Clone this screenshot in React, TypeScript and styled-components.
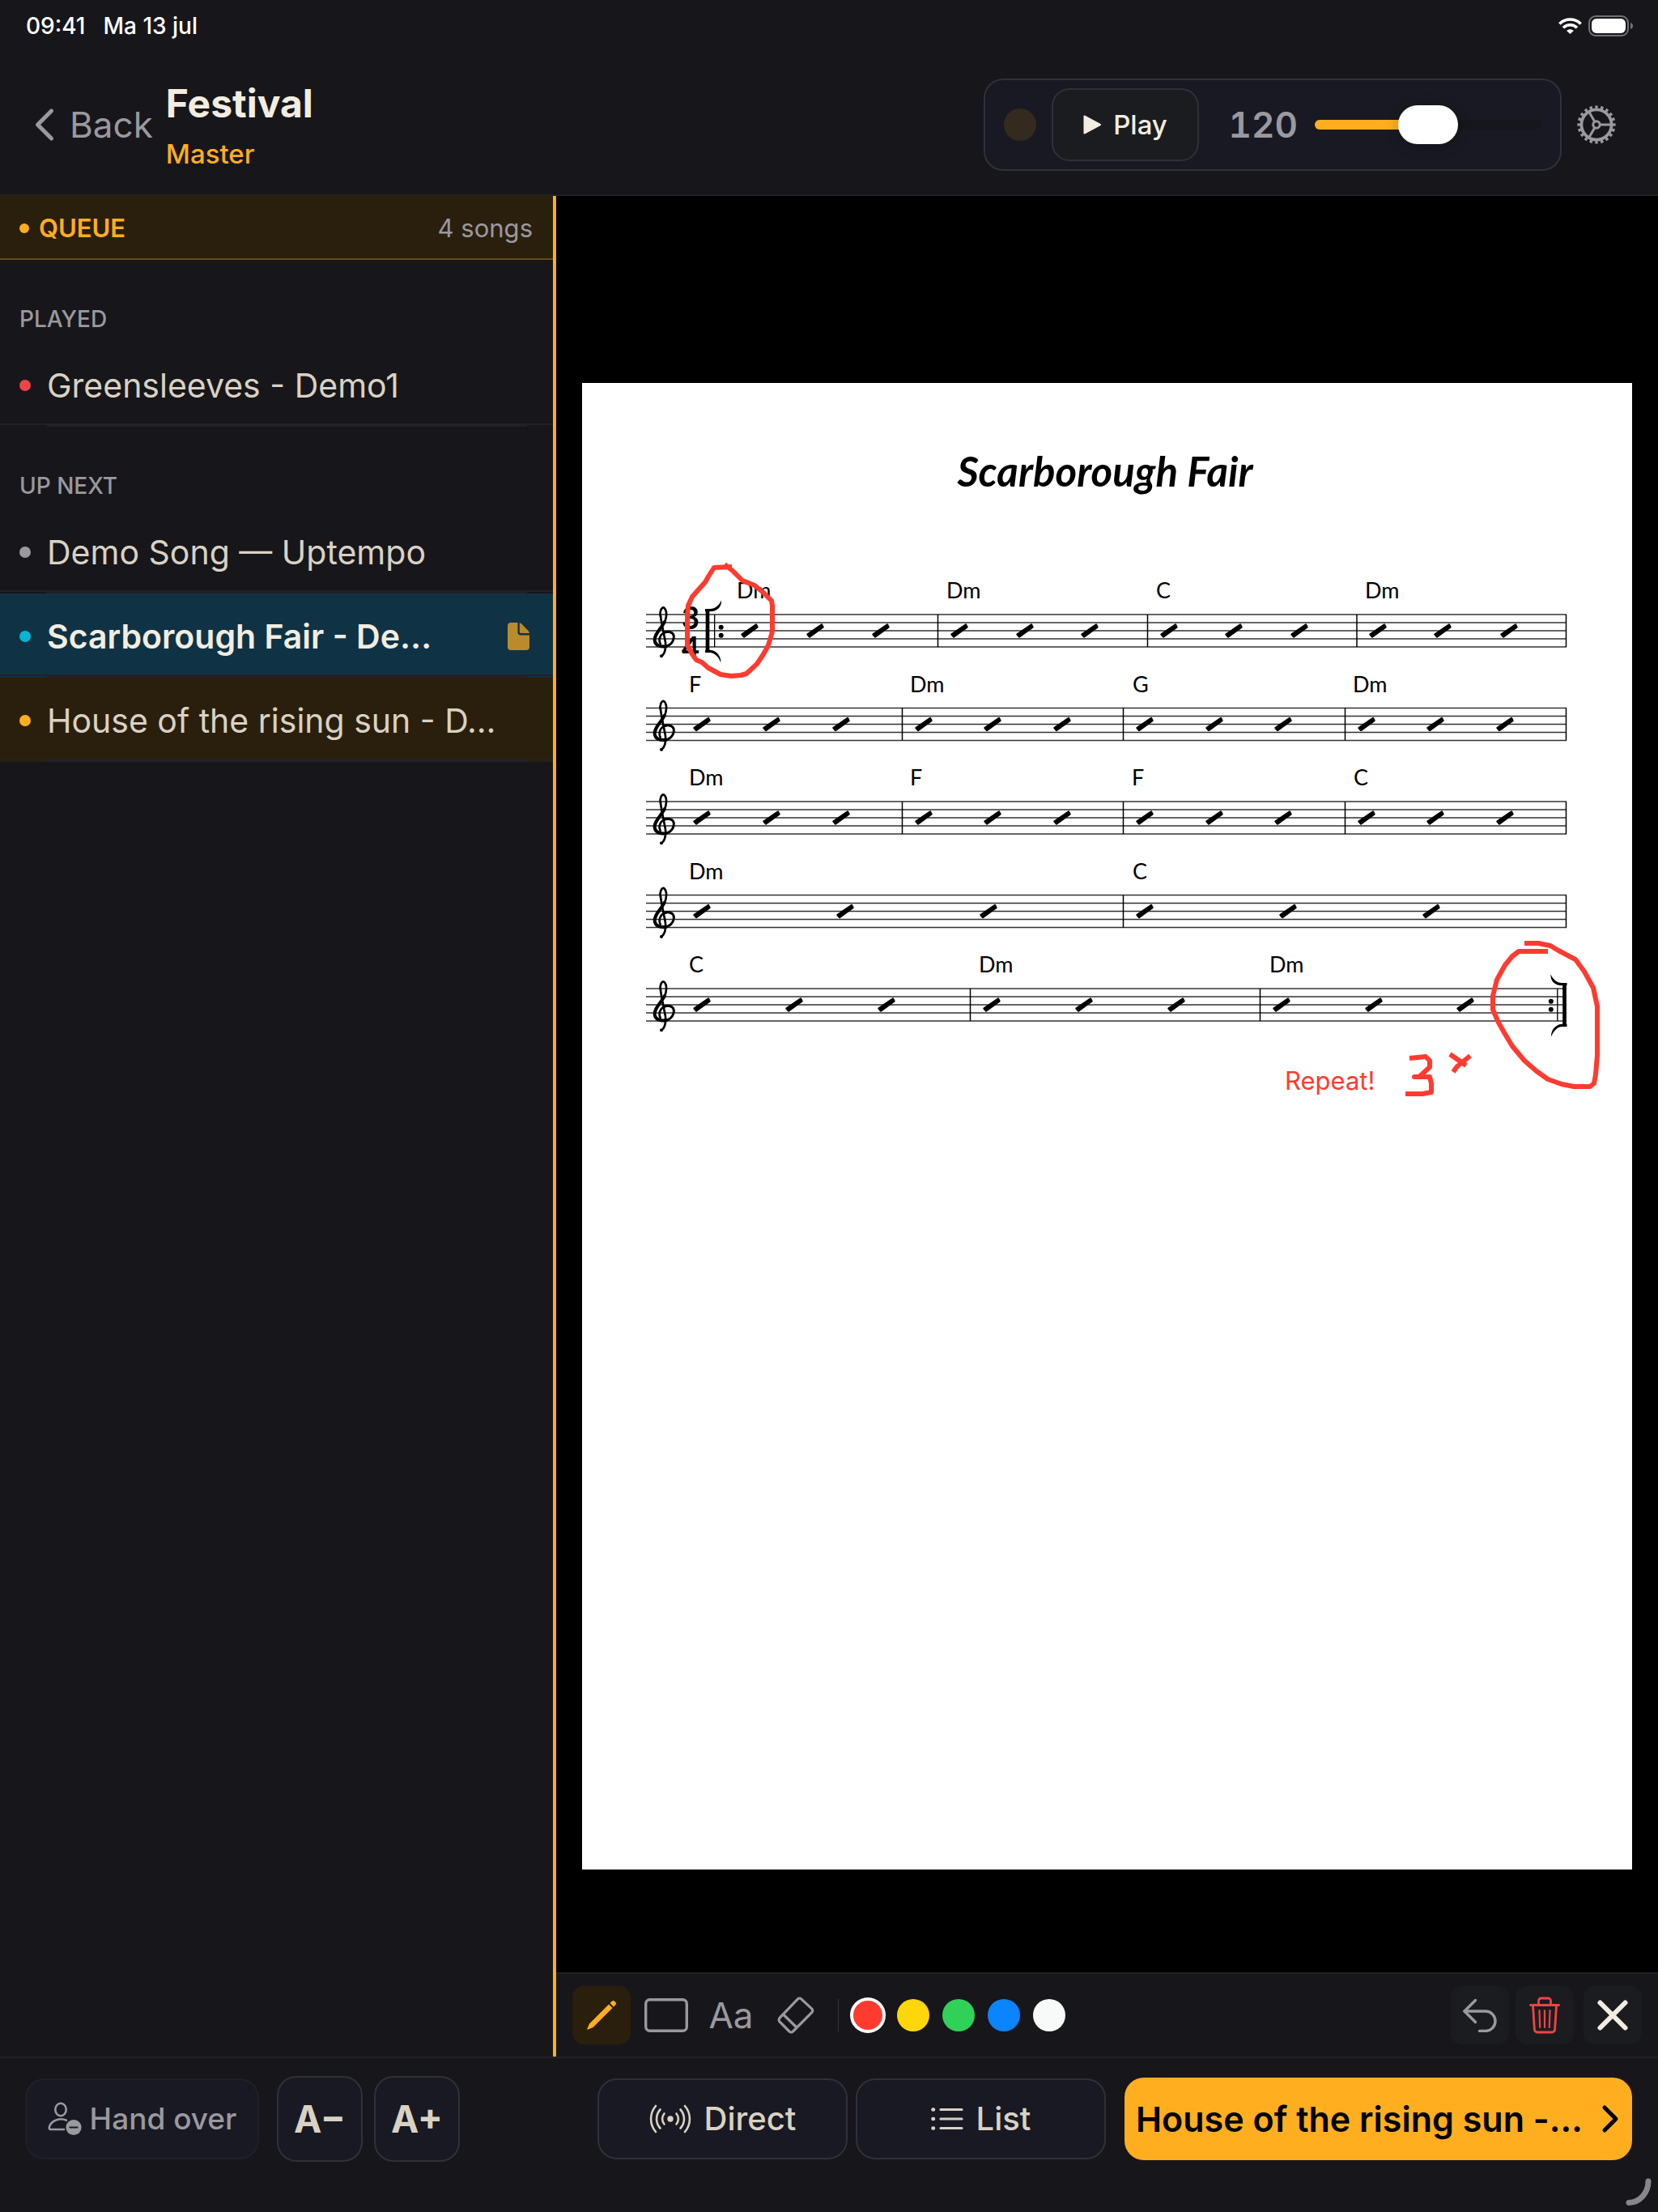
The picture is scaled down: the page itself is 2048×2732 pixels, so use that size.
import React, { useState } from "react";
import styled, { createGlobalStyle, css } from "styled-components";

const color = {
  bg: "#17161b",
  panel: "#181922",
  raised: "#1b1c20",
  line: "#222127",
  outline: "#303138",
  amber: "#ffae20",
  amberDim: "#2a1f0d",
  cream: "#f2ede0",
  sand: "#d9d2c3",
  muted: "#9a999e",
  red: "#ff3b30",
};

const GlobalStyle = createGlobalStyle`
  *, *::before, *::after { box-sizing: border-box; }
  body { margin: 0; background: ${color.bg}; }
  button, input { font: inherit; color: inherit; margin: 0; }
  h1, h2, p, ul { margin: 0; padding: 0; font: inherit; }
`;

const App_ = styled.div`
  position: relative;
  display: flex;
  flex-direction: column;
  min-height: 100vh;
  background: ${color.bg};
  color: ${color.cream};
  font-family: Inter, "Liberation Sans", sans-serif;
`;

/* ---------- status bar ---------- */

const StatusBar = styled.div`
  display: flex;
  align-items: center;
  justify-content: space-between;
  height: 64px;
  padding: 0 30px 0 32px;
  color: #fff;
  font-size: 28px;
  line-height: 32px;
  font-weight: 500;
`;

const StatusGroup = styled.div<{ $gap: number }>`
  display: flex;
  align-items: center;
  gap: ${(p) => p.$gap}px;
`;

/* ---------- header ---------- */

const Header = styled.header`
  display: flex;
  align-items: center;
  justify-content: space-between;
  height: 178px;
  padding: 3px 52px 0 42px;
  border-bottom: 2px solid ${color.line};
`;

const HeaderSide = styled.div<{ $gap: number }>`
  display: flex;
  align-items: center;
  gap: ${(p) => p.$gap}px;
`;

const PlainButton = styled.button`
  display: flex;
  align-items: center;
  padding: 0;
  border: 0;
  background: none;
  color: ${color.muted};
`;

const BackButton = styled(PlainButton)`
  gap: 18px;
  font-size: 44px;
  line-height: 52px;
`;

const TitleBlock = styled.div`
  display: flex;
  flex-direction: column;
  gap: 12px;
`;

const Title = styled.h1`
  font-size: 48px;
  line-height: 60px;
  font-weight: 700;
`;

const Role = styled.p`
  color: ${color.amber};
  font-size: 33px;
  line-height: 40px;
  font-weight: 500;
`;

const Metronome = styled.section`
  display: flex;
  align-items: center;
  height: 114px;
  padding: 0 23px;
  border: 2px solid ${color.outline};
  border-radius: 24px;
  background: ${color.panel};
`;

const BeatLight = styled.span`
  width: 40px;
  height: 40px;
  margin-right: 19px;
  border-radius: 50%;
  background: #342a1e;
`;

const PlayButton = styled.button`
  display: flex;
  align-items: center;
  justify-content: center;
  gap: 14px;
  width: 182px;
  height: 90px;
  padding: 0;
  border: 2px solid ${color.outline};
  border-radius: 22px;
  background: ${color.raised};
  color: ${color.cream};
  font-size: 33px;
  line-height: 40px;
  font-weight: 500;
`;

const Tempo = styled.label`
  width: 122px;
  margin-right: 21px;
  text-align: right;
  color: ${color.muted};
  font-size: 44px;
  line-height: 52px;
  font-weight: 600;
  font-variant-numeric: tabular-nums;
`;

const TempoSlider = styled.input`
  appearance: none;
  width: 280px;
  height: 48px;
  background: none;
  outline: none;

  &::-webkit-slider-runnable-track {
    height: 12px;
    border-radius: 6px;
    background: linear-gradient(
      to right,
      ${color.amber} var(--fill),
      #16171a var(--fill)
    );
  }

  &::-webkit-slider-thumb {
    appearance: none;
    width: 74px;
    height: 48px;
    margin-top: -18px;
    border-radius: 24px;
    background: #fff;
    box-shadow: 0 2px 16px rgba(0, 0, 0, 0.25);
  }
`;

/* ---------- body ---------- */

const Body = styled.div`
  display: flex;
  flex: 1;
  min-height: 0;
`;

const Sidebar = styled.aside`
  flex: 0 0 687px;
  border-right: 4px solid ${color.amber};
`;

const QueueHeader = styled.div`
  display: flex;
  align-items: center;
  gap: 12px;
  height: 79px;
  padding: 3px 25px 0 24px;
  border-bottom: 2px solid #6b4a14;
  background: ${color.amberDim};
  font-size: 31px;
  line-height: 40px;
`;

const Dot = styled.span<{ $color: string; $size: number }>`
  flex: none;
  width: ${(p) => p.$size}px;
  height: ${(p) => p.$size}px;
  border-radius: 50%;
  background: ${(p) => p.$color};
`;

const QueueTitle = styled.h2`
  flex: 1;
  color: ${color.amber};
  font-weight: 600;
`;

const QueueCount = styled.span`
  color: ${color.muted};
`;

const SectionLabel = styled.h2`
  display: flex;
  align-items: flex-end;
  height: 102px;
  padding: 0 24px 12px;
  color: ${color.muted};
  font-size: 28px;
  line-height: 34px;
  font-weight: 500;
`;

const SongList = styled.ul`
  list-style: none;
`;

type RowTone = "plain" | "current" | "next";
const rowBackground: Record<RowTone, string> = {
  plain: "transparent",
  current: "#103245",
  next: color.amberDim,
};

const SongRow = styled.li<{ $tone: RowTone }>`
  background: ${(p) => rowBackground[p.$tone]};

  &::after {
    content: "";
    display: block;
    height: 2px;
    margin: 0 32px 0 58px;
    background: ${color.line};
  }
`;

const SongButton = styled.button<{ $bold: boolean }>`
  display: flex;
  align-items: center;
  gap: 20px;
  width: 100%;
  height: 102px;
  padding: 5px 28px 0 24px;
  border: 0;
  border-bottom: 2px solid ${color.line};
  background: none;
  text-align: left;
  font-size: 41px;
  line-height: 52px;
  color: ${(p) => (p.$bold ? color.cream : color.sand)};
  font-weight: ${(p) => (p.$bold ? 600 : 400)};
`;

const SongName = styled.span`
  flex: 1;
  white-space: nowrap;
`;

const Viewer = styled.main`
  display: flex;
  flex-direction: column;
  flex: 1;
  min-width: 0;
`;

const Stage = styled.div`
  display: flex;
  flex: 1;
  align-items: center;
  padding: 104px 32px 0;
  background: #000;
`;

const SheetSvg = styled.svg`
  display: block;
  width: 100%;
  height: auto;
  background: #fff;
`;

const Toolbar = styled.div`
  display: flex;
  align-items: center;
  justify-content: space-between;
  height: 104px;
  padding: 0 20px;
  border-top: 2px solid ${color.line};
`;

const ToolGroup = styled.div<{ $gap: number }>`
  display: flex;
  align-items: center;
  gap: ${(p) => p.$gap}px;
`;

const ToolButton = styled.button<{ $look?: "active" | "raised" }>`
  display: flex;
  align-items: center;
  justify-content: center;
  width: 72px;
  height: 72px;
  padding: 0;
  border: 0;
  border-radius: 14px;
  font-size: 44px;
  line-height: 52px;
  color: ${color.muted};
  background: ${(p) =>
    p.$look === "active"
      ? color.amberDim
      : p.$look === "raised"
        ? color.raised
        : "none"};
`;

const Divider = styled.span`
  width: 1px;
  height: 40px;
  background: #36353b;
`;

const Swatch = styled.input<{ $color: string }>`
  appearance: none;
  width: 40px;
  height: 40px;
  border-radius: 50%;
  background: ${(p) => p.$color};

  &:checked {
    border: 2px solid #fff;
    box-shadow: 0 0 0 2px #fff;
  }
`;

/* ---------- footer ---------- */

const Footer = styled.footer`
  display: grid;
  grid-template-columns: 707px 1fr;
  align-items: center;
  height: 192px;
  padding: 0 32px 41px 31px;
  border-top: 2px solid ${color.line};
`;

const FooterGroup = styled.div<{ $gap: number }>`
  display: flex;
  align-items: center;
  gap: ${(p) => p.$gap}px;
`;

const FooterButton = styled.button<{ $kind: "ghost" | "normal" | "square" | "primary" }>`
  display: flex;
  align-items: center;
  justify-content: center;
  height: 100px;
  padding: 0;
  border: 2px solid ${color.outline};
  border-radius: 24px;
  background: ${color.panel};
  color: ${color.sand};
  font-size: 40px;
  line-height: 48px;
  font-weight: 500;
  white-space: nowrap;

  ${(p) =>
    p.$kind === "ghost" &&
    css`
      gap: 10px;
      width: 289px;
      margin-right: 8px;
      border-color: #202127;
      color: ${color.muted};
      font-size: 37px;
    `}
  ${(p) =>
    p.$kind === "normal" &&
    css`
      gap: 16px;
      width: 309px;
    `}
  ${(p) =>
    p.$kind === "square" &&
    css`
      width: 106px;
      height: 106px;
      font-size: 46px;
      font-weight: 700;
    `}
  ${(p) =>
    p.$kind === "primary" &&
    css`
      flex: 1;
      justify-content: space-between;
      height: 102px;
      margin-left: 13px;
      padding: 0 16px 0 14px;
      border: 0;
      background: ${color.amber};
      color: #000;
      font-size: 43px;
      line-height: 52px;
      font-weight: 600;
    `}
`;

const ResizeMark = styled.svg`
  position: absolute;
  right: 6px;
  bottom: 6px;
`;

/* ---------- icons ---------- */

const WifiIcon = () => (
  <svg width="29" height="20" viewBox="0 0 29 20" fill="none" stroke="#fff" strokeWidth="3.6">
    <path d="M1.4 7.4C8.6 0.2 20.4 0.2 27.6 7.4" />
    <path d="M6 12.2C10.7 7.6 18.3 7.6 23 12.2" />
    <path d="M10.2 16C12.6 13.6 16.4 13.6 18.8 16L14.5 20Z" fill="#fff" stroke="none" />
  </svg>
);

const BatteryIcon = () => (
  <svg width="56" height="26" viewBox="0 0 56 26">
    <rect x="1" y="1" width="48" height="24" rx="8" fill="none" stroke="#737276" strokeWidth="2" />
    <rect x="4" y="4" width="42" height="18" rx="6" fill="#fff" />
    <path d="M52 9C54.4 9.8 55 11.4 55 13S54.4 16.2 52 17Z" fill="#737276" />
  </svg>
);

const ChevronLeft = () => (
  <svg width="26" height="42" viewBox="0 0 26 42" fill="none" stroke="currentColor" strokeWidth="5" strokeLinecap="round" strokeLinejoin="round">
    <path d="M21.5 4L4.5 21L21.5 38" />
  </svg>
);

const ChevronRight = () => (
  <svg width="22" height="36" viewBox="0 0 22 36" fill="none" stroke="currentColor" strokeWidth="5" strokeLinecap="round" strokeLinejoin="round">
    <path d="M4 4L18 18L4 32" />
  </svg>
);

const PlayIcon = () => (
  <svg width="23" height="26" viewBox="0 0 23 26" fill="currentColor" stroke="currentColor" strokeWidth="2" strokeLinejoin="round">
    <path d="M1.5 2.5V23.5L21 13Z" />
  </svg>
);

const GearIcon = () => (
  <svg width="48" height="48" viewBox="-24 -24 48 48" fill="none" stroke="currentColor">
    <circle r="18.6" strokeWidth="3.8" />
    <circle r="21.6" strokeWidth="4" pathLength="40" strokeDasharray="1 1" strokeDashoffset="0.5" />
    <circle r="4.2" strokeWidth="3" />
    <path d="M5 0H18M-2.5 -4.3L-9 -15.6M-2.5 4.3L-9 15.6" strokeWidth="3" />
  </svg>
);

const FileIcon = () => (
  <svg width="28" height="36" viewBox="0 0 28 36" fill="#b98b2b">
    <path d="M4 1H12.5V12.5A4 4 0 0 0 16.500 16.500H27V31A4 4 0 0 1 23 35H4A4 4 0 0 1 0 31V5A4 4 0 0 1 4 1Z" />
    <path d="M14.800 1.500C16 1.500 17 2.200 18 3.200L25 10.400C26.200 11.700 26.800 12.600 26.900 14H16.500A1.700 1.700 0 0 1 14.800 12.300Z" />
  </svg>
);

const PencilIcon = () => (
  <svg width="40" height="40" viewBox="0 0 40 40" fill={color.amber}>
    <path d="M29 6.500L33.500 11L9.500 35L3.400 37.600A0.800 0.800 0 0 1 2.400 36.600L5 30.500Z" />
    <path d="M30.500 5L32.500 3A2.800 2.800 0 0 1 36.500 3L37 3.500A2.800 2.800 0 0 1 37 7.500L35 9.500Z" />
  </svg>
);

const RectIcon = () => (
  <svg width="54" height="42" viewBox="0 0 54 42" fill="none" stroke="currentColor" strokeWidth="3.4">
    <rect x="1.700" y="1.700" width="50.600" height="38.600" rx="5" />
  </svg>
);

const EraserIcon = () => (
  <svg width="46" height="46" viewBox="0 0 46 46" fill="none" stroke="currentColor" strokeWidth="3.2" strokeLinejoin="round">
    <path d="M25.500 2.900A3 3 0 0 1 29.700 2.900L42.900 15.200A3 3 0 0 1 42.900 19.400L19.500 43A3 3 0 0 1 15 43L3.200 31.200A3.500 3.500 0 0 1 3.200 26.200Z" />
    <path d="M7.500 22L24.500 38.500" />
  </svg>
);

const UndoIcon = () => (
  <svg width="42" height="42" viewBox="0 0 42 42" fill="none" stroke="currentColor" strokeWidth="3.4" strokeLinecap="round" strokeLinejoin="round">
    <path d="M15.500 2.500L2 16L15.500 29.500" />
    <path d="M2 16H28A12 12.200 0 0 1 28 40.400H20.500" />
  </svg>
);

const TrashIcon = () => (
  <svg width="38" height="46" viewBox="0 0 38 46" fill="none" stroke="#ef4444" strokeWidth="2.800" strokeLinecap="round" strokeLinejoin="round">
    <path d="M1.500 10.500H36.500" />
    <path d="M11.500 10V5A3 3 0 0 1 14.500 2H23.500A3 3 0 0 1 26.500 5V10" />
    <path d="M4.500 11L6.400 40.500A3.600 3.600 0 0 0 10 44H28A3.600 3.600 0 0 0 31.600 40.500L33.500 11" />
    <path d="M12.500 17L13.200 38M19 17V38M25.500 17L24.800 38" strokeWidth="2.200" />
  </svg>
);

const CloseIcon = () => (
  <svg width="40" height="40" viewBox="0 0 40 40" fill="none" stroke={color.cream} strokeWidth="6" strokeLinecap="round">
    <path d="M4.500 4.500L35.500 35.500M35.500 4.500L4.500 35.500" />
  </svg>
);

const HandOverIcon = () => (
  <svg width="42" height="42" viewBox="0 0 42 42" fill="none" stroke="currentColor" strokeWidth="2.600" strokeLinecap="round">
    <ellipse cx="16" cy="9.500" rx="6.700" ry="7.800" />
    <path d="M23 22.700C17 20 8 21 3.500 27.500C1.500 30.500 0.800 34 3.500 34H20" />
    <circle cx="32" cy="31.500" r="9.600" fill="currentColor" stroke="none" />
    <path d="M27.500 31.500H36.500" stroke={color.panel} strokeWidth="2.200" />
  </svg>
);

const BroadcastIcon = () => (
  <svg width="52" height="36" viewBox="-26 -18 52 36" fill="none" stroke="currentColor" strokeWidth="2.600" strokeLinecap="round">
    <circle r="3.700" fill="currentColor" stroke="none" />
    <path d="M7.500 -6.500A10 10 0 0 1 7.500 6.500M-7.500 -6.500A10 10 0 0 0 -7.500 6.500" />
    <path d="M12.500 -11.500A17 17 0 0 1 12.500 11.500M-12.500 -11.500A17 17 0 0 0 -12.500 11.500" />
    <path d="M18 -16A24.500 24.500 0 0 1 18 16M-18 -16A24.500 24.500 0 0 0 -18 16" />
  </svg>
);

const ListIcon = () => (
  <svg width="40" height="32" viewBox="0 0 40 32" fill="none" stroke="currentColor" strokeWidth="3.200" strokeLinecap="round">
    <path d="M12 4.500H38M12 16H38M12 27.500H38" />
    <path d="M2.500 4.500H3M2.500 16H3M2.500 27.500H3" strokeWidth="4.600" />
  </svg>
);

/* ---------- sheet music ---------- */

type Staff = { top: number; chords: [number, string][]; bars: number[]; beats: number[] };

const evenBeats = [148, 234, 320, 422, 507, 593, 695, 781, 866, 969, 1054, 1140];
const evenBars = [395.5, 668.5, 942.5, 1215.5];

const staves: Staff[] = [
  {
    top: 286,
    chords: [[191, "Dm"], [450, "Dm"], [709, "C"], [967, "Dm"]],
    bars: [439.5, 698.5, 957, 1215.5],
    beats: [207, 288, 369, 466, 547, 627, 725, 805, 886, 983, 1063, 1145],
  },
  {
    top: 401.5,
    chords: [[132, "F"], [405, "Dm"], [680, "G"], [952, "Dm"]],
    bars: evenBars,
    beats: evenBeats,
  },
  {
    top: 517,
    chords: [[132, "Dm"], [405, "F"], [679, "F"], [953, "C"]],
    bars: evenBars,
    beats: evenBeats,
  },
  {
    top: 632.5,
    chords: [[132, "Dm"], [680, "C"]],
    bars: [668.5, 1215.5],
    beats: [148, 325, 502, 695, 872, 1049],
  },
  {
    top: 748,
    chords: [[132, "C"], [490, "Dm"], [849, "Dm"]],
    bars: [479.5, 837.5],
    beats: [148, 262, 376, 506, 620, 734, 864, 978, 1091],
  },
];

const Clef = ({ top }: { top: number }) => (
  <g transform={`translate(61 ${top}) scale(0.3333) translate(0 -236)`} fill="none" stroke="#000" strokeLinecap="round">
    <path d="M108 242C103 226 112 206 121 211C133 222 131 248 121 268" strokeWidth="8" />
    <path d="M122 264C108 292 84 308 86 332C88 352 112 358 130 353" strokeWidth="12" />
    <path d="M118 354C140 356 158 338 157 316C155 300 136 298 124 302" strokeWidth="9" />
    <path d="M150 304C136 296 118 300 110 312C102 324 102 334 107 344" strokeWidth="8" />
    <path d="M108 242C112 275 122 315 126 340C128 362 122 382 111 391" strokeWidth="8" />
    <circle cx="111" cy="390" r="3" strokeWidth="6" />
  </g>
);

/* Winged repeat sign; `flip` mirrors it for the closing one. */
const RepeatSign = ({ x, top, flip }: { x: number; top: number; flip?: boolean }) => (
  <g transform={`translate(${x} ${top}) scale(${flip ? -0.3333 : 0.3333} 0.3333)`}>
    <rect x="-7" y="-18" width="14" height="156" />
    <rect x="24" y="0" width="4" height="120" />
    <path d="M-9 -21H8C26 -20 44 -34 51 -53C53 -30 38 -11 8 -11H-9Z" />
    <path d="M-9 131H8C34 131 52 158 49 178C42 158 26 141 8 141H-9Z" />
    <circle cx="50" cy="47" r="9" />
    <circle cx="50" cy="77" r="9" />
  </g>
);

const Ink = styled.polyline`
  fill: none;
  stroke: ${color.red};
  stroke-width: 6;
  stroke-linejoin: round;
`;

const Notation = styled.text`
  font-family: Lato, sans-serif;
  font-size: 27px;
`;

const SheetTitle = styled.text`
  font-family: Lato, sans-serif;
  font-size: 51px;
  font-style: italic;
  font-weight: 700;
  text-anchor: middle;
`;

const TimeDigit = styled.text`
  font-family: Lato, sans-serif;
  font-size: 38px;
  font-weight: 700;
  text-anchor: middle;
`;

const NoteText = styled.text`
  font-family: Inter, sans-serif;
  font-size: 31px;
  fill: ${color.red};
`;

const Sheet = () => (
  <SheetSvg viewBox="0 0 1297 1836" role="img" aria-label="Scarborough Fair">
    <SheetTitle x="646" y="128">Scarborough Fair</SheetTitle>
    {staves.map((s) => (
      <g key={s.top}>
        {[0, 10, 20, 30, 40].map((dy) => (
          <path key={dy} d={`M79 ${s.top + dy}H1216`} stroke="#333" strokeWidth="1.500" />
        ))}
        {s.bars.map((x) => (
          <path key={x} d={`M${x} ${s.top}v40`} stroke="#000" strokeWidth="1.500" />
        ))}
        <Clef top={s.top} />
        {s.chords.map(([x, name]) => (
          <Notation key={x} x={x} y={s.top - 20}>{name}</Notation>
        ))}
        {s.beats.map((x) => (
          <path
            key={x}
            transform={`translate(${x} ${s.top + 20})`}
            d="M-9.500 4.500L-7 7.500L9.500 -4.500L8 -7.500Z"
            stroke="#000"
            strokeWidth="2.400"
            strokeLinejoin="round"
          />
        ))}
      </g>
    ))}
    <TimeDigit x="134" y="304">3</TimeDigit>
    <TimeDigit x="134" y="341">4</TimeDigit>
    <RepeatSign x={155} top={286} />
    <RepeatSign x={1213.5} top={748} flip />

    <Ink points="185,227 163,228 156,239 152,246 136,264 131,275 130,287 130,324 136,335 141,342 148,345 156,352 171,360 184,362 196,361 203,359 216,347 224,335 230,324 235,307 235,275 234,269 224,259 213,250 198,244 186,232 176,224" />
    <Ink points="1193,702 1157,702 1149,708 1140,719 1130,737 1125,757 1125,774 1132,790 1140,804 1149,819 1164,837 1179,850 1193,860 1210,866 1225,869 1245,869 1250,865 1252,854 1254,830 1254,770 1249,747 1238,727 1227,712 1206,701 1196,695 1181,692 1164,692" />
    <Ink points="1022,834 1042,832 1047,837 1047,845 1034,857 1028,857 1047,857 1049,865 1049,876 1038,878 1017,878" />
    <Ink points="1072,829 1092,843" />
    <Ink points="1097,831 1081,844 1076,851" />
    <NoteText x="868" y="873">Repeat!</NoteText>
  </SheetSvg>
);

/* ---------- data ---------- */

type Song = { name: string; dot: string; tone: RowTone; hasSheet?: boolean };

const played: Song[] = [{ name: "Greensleeves - Demo1", dot: "#ef4444", tone: "plain" }];
const upNext: Song[] = [
  { name: "Demo Song — Uptempo", dot: color.muted, tone: "plain" },
  { name: "Scarborough Fair - De…", dot: "#06b6d4", tone: "current", hasSheet: true },
  { name: "House of the rising sun - D…", dot: color.amber, tone: "next" },
];

const inks = [
  { name: "Red", value: color.red },
  { name: "Yellow", value: "#ffd60a" },
  { name: "Green", value: "#30d158" },
  { name: "Blue", value: "#0a84ff" },
  { name: "White", value: "#f8f9f9" },
];

const Songs = ({ songs }: { songs: Song[] }) => (
  <SongList>
    {songs.map((song) => (
      <SongRow key={song.name} $tone={song.tone}>
        <SongButton $bold={song.tone === "current"}>
          <Dot $color={song.dot} $size={14} />
          <SongName>{song.name}</SongName>
          {song.hasSheet && <FileIcon />}
        </SongButton>
      </SongRow>
    ))}
  </SongList>
);

const MIN_BPM = 40;
const MAX_BPM = 200;

export default function App() {
  const [bpm, setBpm] = useState(120);
  const [ink, setInk] = useState("Red");
  const fill = `${((bpm - MIN_BPM) / (MAX_BPM - MIN_BPM)) * 100}%`;

  return (
    <App_>
      <GlobalStyle />
      <StatusBar>
        <StatusGroup $gap={22}>
          <span>09:41</span>
          <span>Ma 13 jul</span>
        </StatusGroup>
        <StatusGroup $gap={8}>
          <WifiIcon />
          <BatteryIcon />
        </StatusGroup>
      </StatusBar>

      <Header>
        <HeaderSide $gap={16}>
          <BackButton>
            <ChevronLeft />
            Back
          </BackButton>
          <TitleBlock>
            <Title>Festival</Title>
            <Role>Master</Role>
          </TitleBlock>
        </HeaderSide>
        <HeaderSide $gap={19}>
          <Metronome>
            <BeatLight />
            <PlayButton>
              <PlayIcon />
              Play
            </PlayButton>
            <Tempo htmlFor="tempo">{bpm}</Tempo>
            <TempoSlider
              id="tempo"
              type="range"
              min={MIN_BPM}
              max={MAX_BPM}
              value={bpm}
              onChange={(e) => setBpm(Number(e.target.value))}
              style={{ "--fill": fill } as React.CSSProperties}
            />
          </Metronome>
          <PlainButton aria-label="Settings">
            <GearIcon />
          </PlainButton>
        </HeaderSide>
      </Header>

      <Body>
        <Sidebar>
          <QueueHeader>
            <Dot $color={color.amber} $size={12} />
            <QueueTitle>QUEUE</QueueTitle>
            <QueueCount>4 songs</QueueCount>
          </QueueHeader>
          <SectionLabel>PLAYED</SectionLabel>
          <Songs songs={played} />
          <SectionLabel>UP NEXT</SectionLabel>
          <Songs songs={upNext} />
        </Sidebar>

        <Viewer>
          <Stage>
            <Sheet />
          </Stage>
          <Toolbar>
            <ToolGroup $gap={16}>
              <ToolGroup $gap={8}>
                <ToolButton $look="active" aria-label="Pen"><PencilIcon /></ToolButton>
                <ToolButton aria-label="Rectangle"><RectIcon /></ToolButton>
                <ToolButton aria-label="Text">Aa</ToolButton>
                <ToolButton aria-label="Eraser"><EraserIcon /></ToolButton>
              </ToolGroup>
              <Divider />
              {inks.map((i) => (
                <Swatch
                  key={i.name}
                  type="radio"
                  name="ink"
                  aria-label={i.name}
                  $color={i.value}
                  checked={ink === i.name}
                  onChange={() => setInk(i.name)}
                />
              ))}
            </ToolGroup>
            <ToolGroup $gap={12}>
              <ToolGroup $gap={8}>
                <ToolButton $look="raised" aria-label="Undo"><UndoIcon /></ToolButton>
                <ToolButton $look="raised" aria-label="Clear"><TrashIcon /></ToolButton>
              </ToolGroup>
              <ToolButton $look="raised" aria-label="Close"><CloseIcon /></ToolButton>
            </ToolGroup>
          </Toolbar>
        </Viewer>
      </Body>

      <Footer>
        <FooterGroup $gap={14}>
          <FooterButton $kind="ghost">
            <HandOverIcon />
            Hand over
          </FooterButton>
          <FooterButton $kind="square">A−</FooterButton>
          <FooterButton $kind="square">A+</FooterButton>
        </FooterGroup>
        <FooterGroup $gap={10}>
          <FooterButton $kind="normal">
            <BroadcastIcon />
            Direct
          </FooterButton>
          <FooterButton $kind="normal">
            <ListIcon />
            List
          </FooterButton>
          <FooterButton $kind="primary">
            House of the rising sun -…
            <ChevronRight />
          </FooterButton>
        </FooterGroup>
      </Footer>

      <ResizeMark width="36" height="36" viewBox="0 0 36 36" fill="none" stroke="#878788" strokeWidth="7" strokeLinecap="round">
        <path d="M30 4C30 18 20 30 6 30.500" />
      </ResizeMark>
    </App_>
  );
}
